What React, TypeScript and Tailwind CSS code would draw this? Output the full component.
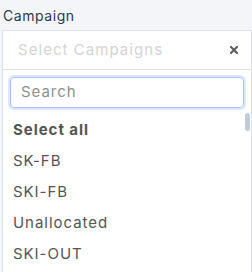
import React from "react";

export default function App() {
  const items = ["SK-FB", "SKI-FB", "Unallocated", "SKI-OUT"];
  return (
    <div
      className="w-[252px] h-[272px] overflow-hidden bg-[#f4f5f9] flex flex-col tracking-[0.06em]"
      style={{ fontFamily: "Inter, 'Open Sans', sans-serif" }}
    >
      <div className="h-[30px] pl-[3px] pt-[7px] text-[14px] leading-[17px] text-[#2d3a4f] tracking-[0.04em]">
        Campaign
      </div>
      <div className="flex flex-1">
        <div className="w-[2px]" />
        <div className="flex-1 flex flex-col">
          <div className="h-[40px] border border-[#dde2ea] bg-white flex items-center justify-between pl-[15px] pr-[13px]">
            <span className="text-[15px] text-[#d4d4d4] tracking-[0.07em]">Select Campaigns</span>
            <svg width="8" height="8" viewBox="0 0 8 8">
              <path d="M1 1L7 7M7 1L1 7" stroke="#5a5a5a" strokeWidth="2" strokeLinecap="square" />
            </svg>
          </div>
          <div className="relative flex-1 border-x border-[#dde2ea] bg-white px-[7px] pt-[7px]">
            <div className="h-[31px] rounded-[4px] border border-[#a9c4f5] shadow-[0_0_0_2px_rgba(160,190,245,0.35)] flex items-center pl-[10px] text-[15px] text-[#909090]">
              Search
            </div>
            <div className="mt-[7px] pl-[3px] flex flex-col">
              <div className="h-[31px] flex items-center text-[15px] font-bold text-[#555]">
                Select all
              </div>
              {items.map((it) => (
                <div key={it} className="h-[31px] flex items-center text-[15px] text-[#555]">
                  {it}
                </div>
              ))}
            </div>
            <div className="absolute right-[1px] top-[43px] w-[5px] h-[18px] rounded-[3px] bg-[#c3ccd6]" />
          </div>
        </div>
      </div>
    </div>
  );
}
